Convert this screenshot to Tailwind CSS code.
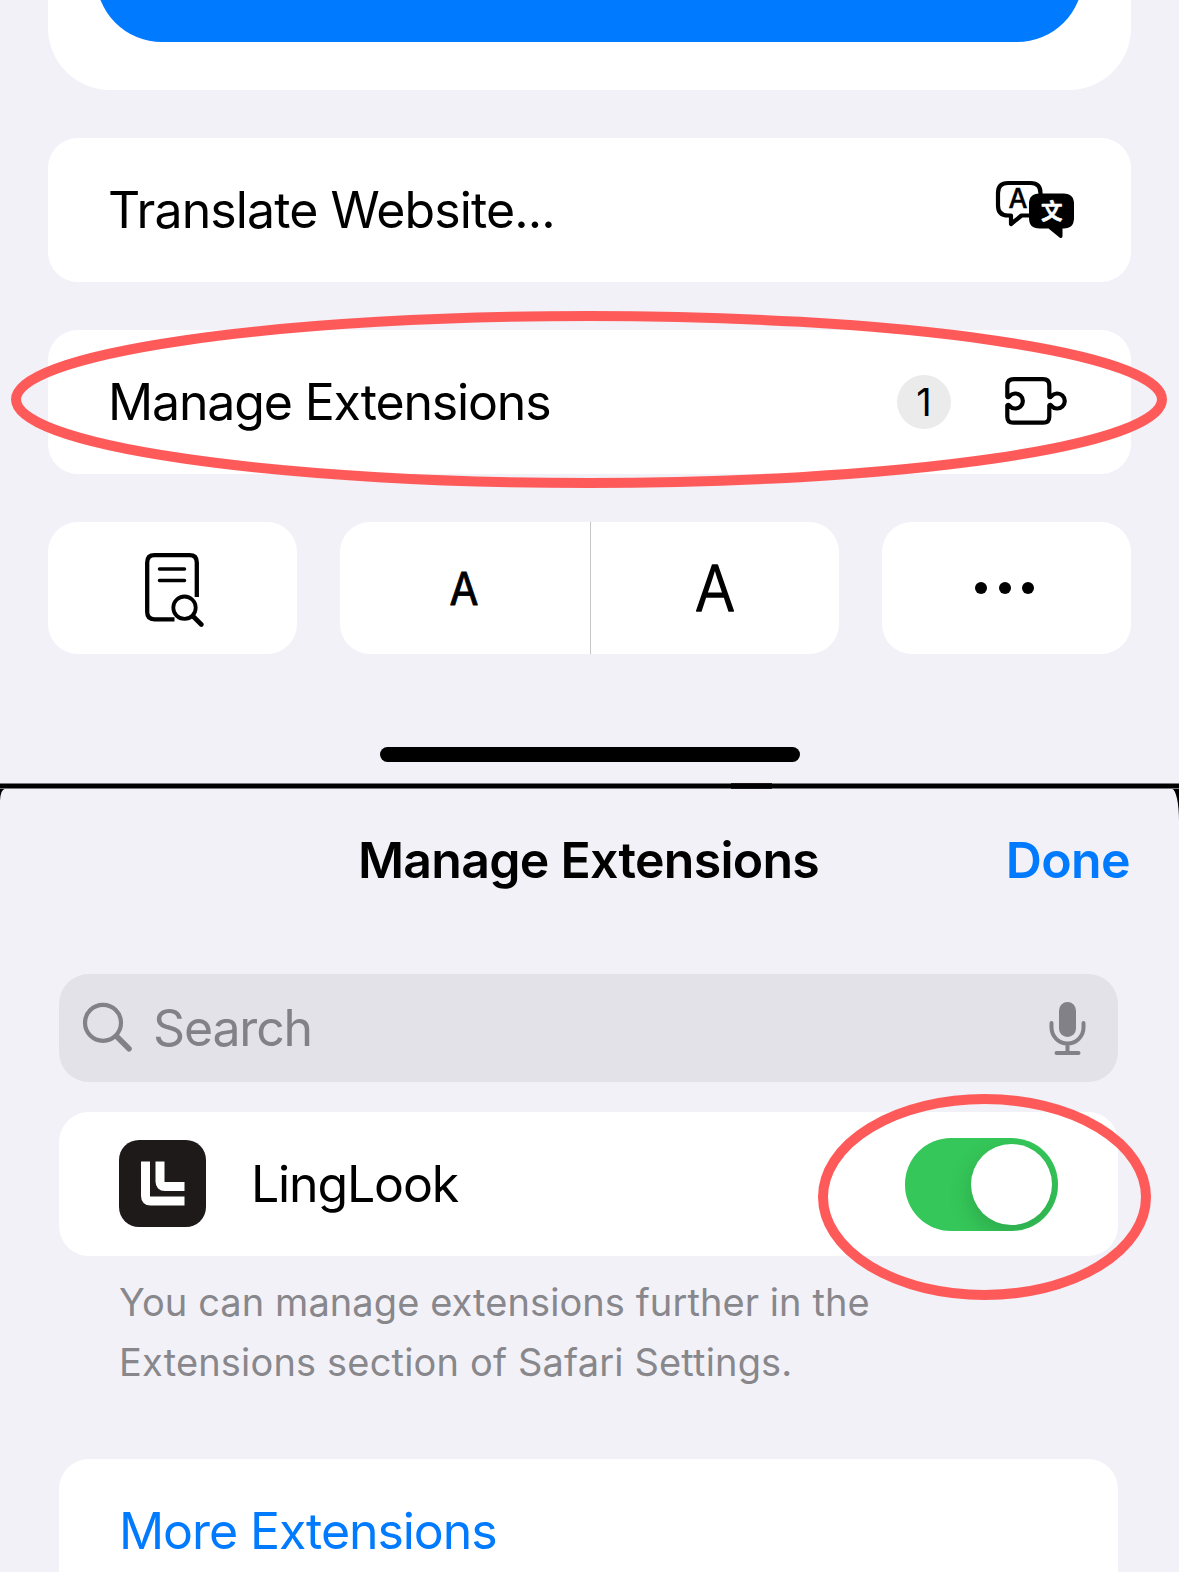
<!DOCTYPE html>
<html lang="en">
<head>
<meta charset="utf-8">
<title>Manage Extensions</title>
<script src="https://cdn.jsdelivr.net/npm/@tailwindcss/browser@4"></script>
</head>
<body class="relative w-[1179px] h-[1572px] overflow-hidden bg-[#f2f1f7] font-['Inter',sans-serif] text-[50px] leading-[60px] text-black">

  <!-- Page menu -->
  <section class="h-[783px] px-12 flex flex-col">
    <div class="h-[90px] shrink-0 px-12 pb-12 bg-white rounded-b-[62px] flex items-end overflow-hidden">
      <div class="h-[150px] w-full shrink-0 bg-[#007aff] rounded-[66px]"></div>
    </div>

    <div class="mt-12 h-36 shrink-0 pl-[60px] pr-[56px] bg-white rounded-[30px] flex items-center justify-between">
      <span class="tracking-[-0.900px]">Translate Website...</span>
      <svg class="w-20 h-[60px]" viewBox="995 180 80 60">
        <path d="M1029 215.500h-7.500l-10.500 8.500v-8.500h-3q-10 0-10-10v-12.500q0-10 10-10h22.500q10 0 10 10v2" fill="none" stroke="#000" stroke-width="4.200" stroke-linejoin="round"/>
        <text x="1018" y="208" text-anchor="middle" font-size="27" font-weight="500" stroke="#000" stroke-width="0.400" stroke-linejoin="round" textLength="19" lengthAdjust="spacingAndGlyphs">A</text>
        <path d="M1039.500 193.500h24q10.500 0 10.500 10.500v14q0 10.500-10.500 10.500h-1v7.500q0 3-3 1.500l-11-9h-9q-10.500 0-10.500-10.500v-14q0-10.500 10.500-10.500z" fill="#000"/>
        <text x="1051.700" y="218.800" text-anchor="middle" fill="#fff" font-size="21.500" font-weight="700" stroke="#fff" stroke-width="0.500" stroke-linejoin="round" font-family="'Noto Sans CJK SC',sans-serif">文</text>
      </svg>
    </div>

    <div class="mt-12 h-36 shrink-0 pl-[60px] pr-[63px] bg-white rounded-[30px] flex items-center">
      <span class="grow tracking-[-1.150px]">Manage Extensions</span>
      <span class="size-[54px] mr-[53px] rounded-full bg-[#ebebeb] text-[38px] flex items-center justify-center">1</span>
      <svg class="w-16 h-[54px]" viewBox="1004 375 64 54" fill="none" stroke="#000" stroke-width="4.200" stroke-linejoin="round" stroke-linecap="round">
        <path d="M1007.300 396.500V385.500q0-6.300 6.500-6.300H1043q6.300 0 6.300 6.300V396.500Q1050 398 1051.500 396.200A7.500 7.500 0 1 1 1051.500 405.800Q1050 404 1049.300 405.500V416.700q0 6-6 6H1013.300q-6 0-6-6V405.500Q1008 404 1009.600 405.800A7.500 7.500 0 1 0 1009.600 396.200Q1008 398 1007.300 396.500z"/>
      </svg>
    </div>

    <div class="mt-12 h-[132px] shrink-0 flex justify-between">
      <div class="w-[249px] bg-white rounded-[30px] flex items-center justify-center">
        <svg class="w-[62px] h-[78px]" viewBox="142 549 62 78" fill="none" stroke="#000" stroke-width="4.300" stroke-linecap="round">
          <path d="M196.800 597v-34.500q0-7.300-7.300-7.300h-35q-7.300 0-7.300 7.300v49.500q0 7.300 7.300 7.300h20" stroke-linecap="butt"/>
          <path d="M159.500 569h25M159.500 580.500h25" stroke-width="3.500"/>
          <circle cx="184.500" cy="607.700" r="11.200" stroke-width="3.800"/>
          <path d="M193.300 616.500l8 8" stroke-width="4.600"/>
        </svg>
      </div>
      <div class="w-[499px] bg-white rounded-[30px] flex">
        <div class="w-[251px] border-r border-[#c6c6c8] pr-[3px] flex items-center justify-center">
          <svg class="w-10 h-14 overflow-visible" viewBox="0 0 40 56"><text x="20" y="44.500" text-anchor="middle" font-size="45" font-weight="400" stroke="#000" stroke-width="0.900" stroke-linejoin="round" textLength="29" lengthAdjust="spacingAndGlyphs">A</text></svg>
        </div>
        <div class="grow pr-px flex items-center justify-center">
          <svg class="w-16 h-24" viewBox="0 0 64 96"><text x="32" y="71" text-anchor="middle" font-size="63" font-weight="300" stroke="#000" stroke-width="1.500" stroke-linejoin="round" textLength="40" lengthAdjust="spacingAndGlyphs">A</text></svg>
        </div>
      </div>
      <div class="w-[249px] pr-[4px] bg-white rounded-[30px] flex items-center justify-center gap-[11.300px]">
        <span class="size-3 rounded-full bg-black"></span>
        <span class="size-3 rounded-full bg-black"></span>
        <span class="size-3 rounded-full bg-black"></span>
      </div>
    </div>

    <div class="mt-[93px] w-[420px] h-[15px] shrink-0 self-center rounded-full bg-black"></div>
  </section>

  <!-- Extensions sheet -->
  <section class="h-[789px] bg-black">
    <div class="h-1.5 border-y border-[#78787b] flex">
      <div class="ml-[731px] -my-px w-[41px] h-1.5 border-y border-[#1c1618] bg-black"></div>
    </div>
    <div class="h-[783px] pl-[59px] pr-[61px] bg-[#f2f1f7] rounded-tl-[5px_12px] rounded-tr-[7px_32px] flex flex-col">
      <header class="h-[142px] shrink-0 -ml-[12px] -mr-[12px] grid grid-cols-[1fr_auto_1fr] items-center font-semibold">
        <span></span>
        <h1 class="tracking-[-0.720px]">Manage Extensions</h1>
        <span class="text-right text-[#007aff] tracking-[-0.600px]">Done</span>
      </header>

      <div class="mt-[43px] h-[108px] shrink-0 pl-[23px] pr-[32px] bg-[#e3e2e8] text-[#828187] rounded-[30px] flex items-center">
        <svg class="w-[50px] h-[50px] overflow-visible" viewBox="82 1003 50 50" fill="none" stroke="#828187" stroke-linecap="round">
          <circle cx="103" cy="1022.800" r="18" stroke-width="4.200"/>
          <path d="M116.500 1036.300l12.500 12.500" stroke-width="5.500"/>
        </svg>
        <span class="grow ml-[21px] tracking-[-1.150px]">Search</span>
        <svg class="w-[38px] h-[56px]" viewBox="1048 1000 38 56" fill="none" stroke="#828187" stroke-width="4" stroke-linecap="round">
          <rect x="1059" y="1002" width="17" height="35" rx="8.500" fill="#828187" stroke="none"/>
          <path d="M1051.500 1023v4.500a16 16 0 0 0 32 0v-4.500M1067.500 1044v8M1056.500 1053h22"/>
        </svg>
      </div>

      <div class="mt-[30px] h-36 shrink-0 px-[60px] bg-white rounded-[30px] flex items-center">
        <svg class="size-[87px] mb-px" viewBox="0 0 87 87">
          <rect width="87" height="87" rx="20" fill="#1e1a19"/>
          <path d="M26.500 21.500v34.500q0 5 5 5h34M41 21.500v20q0 5 5 5h19.500" fill="none" stroke="#fff" stroke-width="9"/>
        </svg>
        <span class="grow ml-[45px] tracking-[-1.150px]">LingLook</span>
        <span class="w-[153px] h-[93px] p-1.5 rounded-[46px] bg-[#35c759] flex justify-end overflow-hidden">
          <span class="size-[81px] rounded-full bg-white shadow-[0_9px_24px_rgba(0,0,0,0.160)]"></span>
        </span>
      </div>

      <p class="mt-4 h-[187px] shrink-0 pl-[60px] text-[38px] leading-[60px] text-[#88878c]"><span class="tracking-[0.080px]">You can manage extensions further in the</span><br><span class="tracking-[0.170px]">Extensions section of Safari Settings.</span></p>

      <div class="h-36 shrink-0 pl-[60px] bg-white rounded-t-[30px] flex items-center text-[#007aff]">
        <span class="tracking-[-1.080px]">More Extensions</span>
      </div>
    </div>
  </section>

  <!-- Highlight rings -->
  <svg class="absolute inset-0 w-[1179px] h-[1572px] pointer-events-none" viewBox="0 0 1179 1572" fill="none" stroke="#ff5a5a" stroke-width="10">
    <ellipse cx="589" cy="399.500" rx="573" ry="83.500"/>
    <ellipse cx="984.500" cy="1197" rx="161.500" ry="98"/>
  </svg>
</body>
</html>
